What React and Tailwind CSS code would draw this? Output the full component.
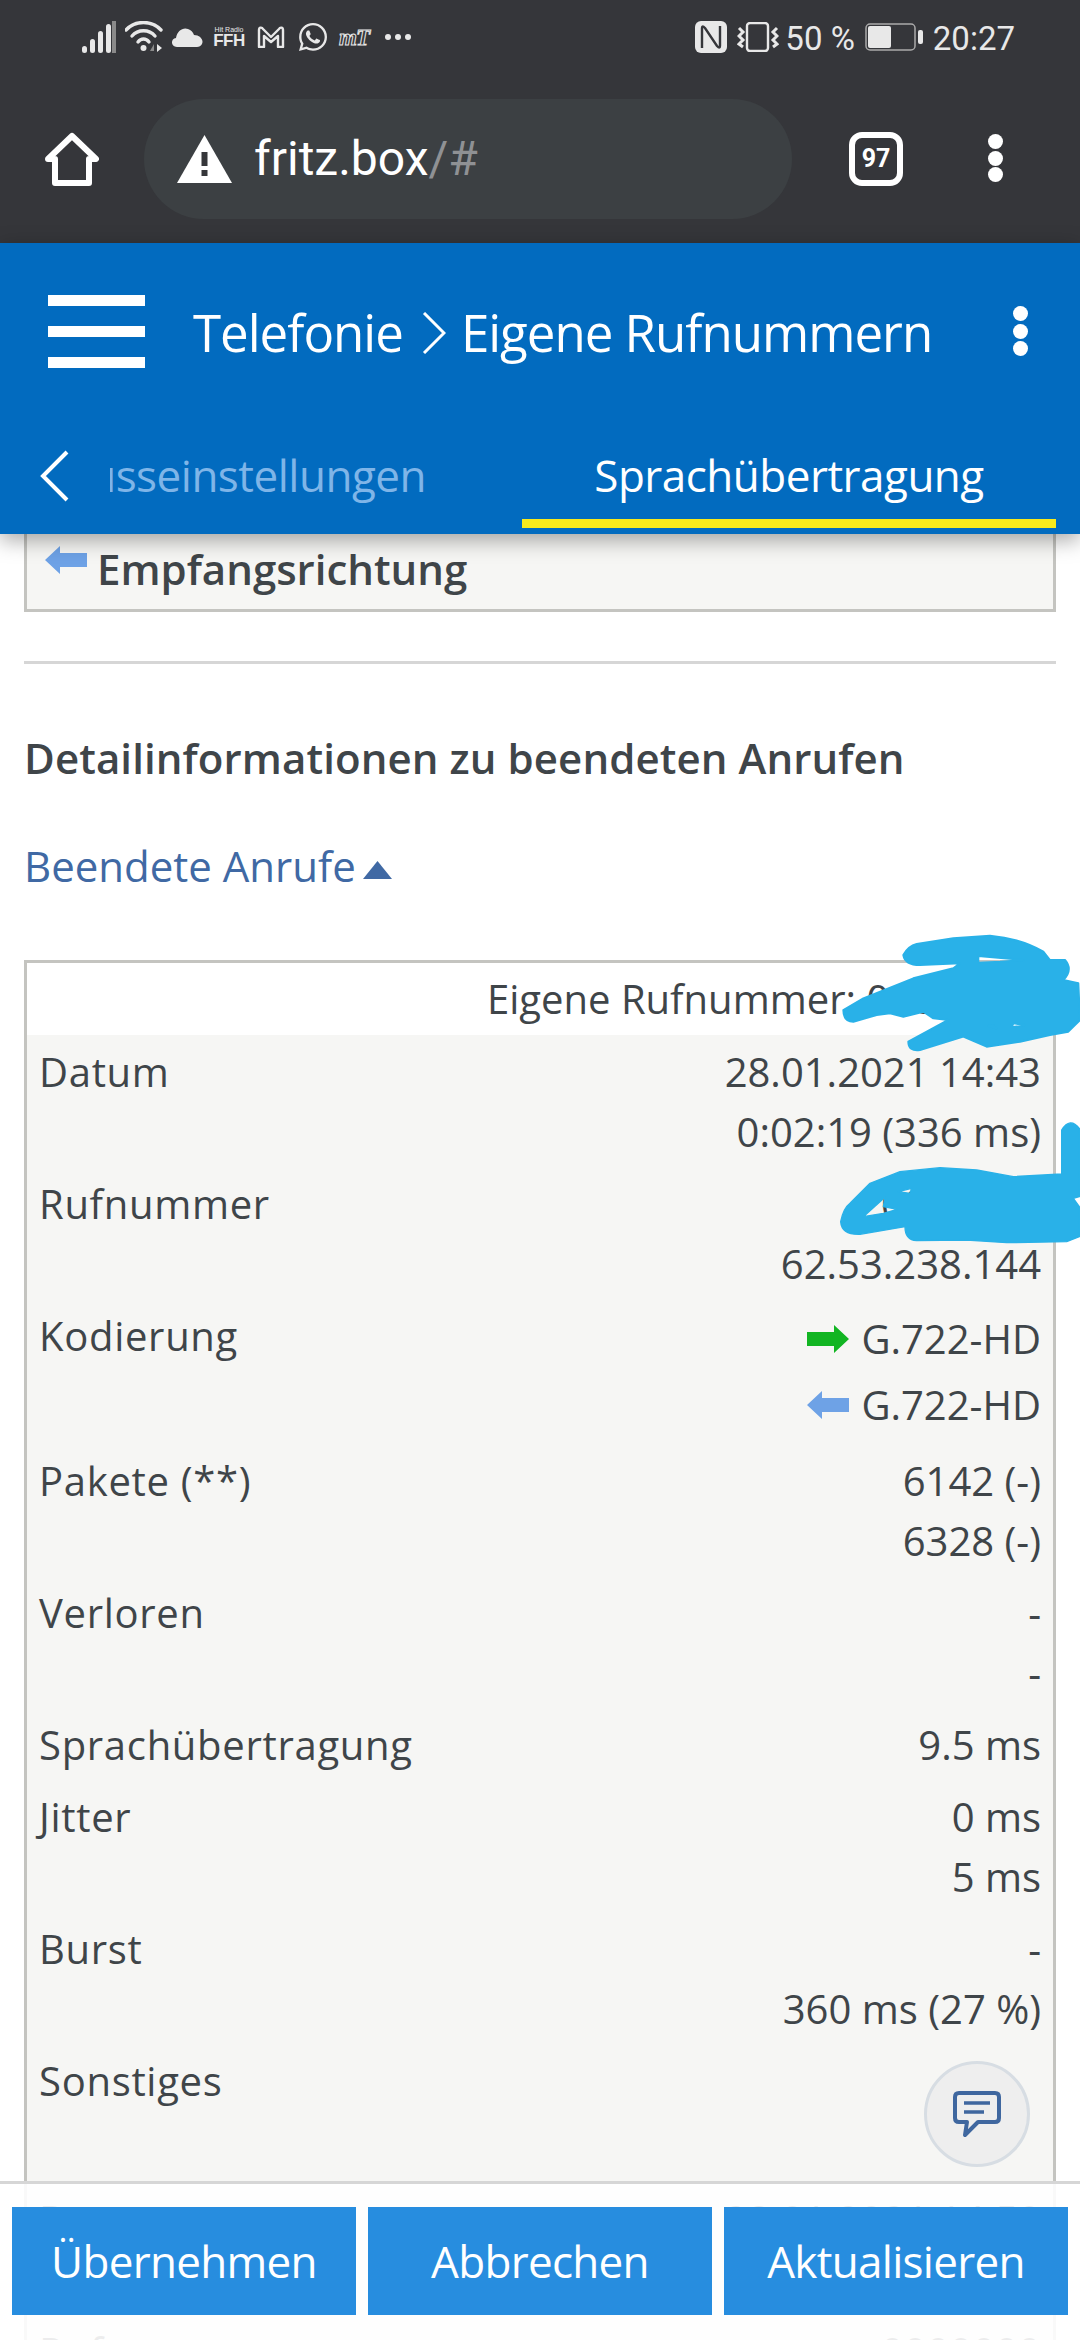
import React from 'react';
import { FaWhatsapp } from 'react-icons/fa';

const SOURCE = { fontFamily: '"Open Sans", "Noto Sans", sans-serif' };

function Arrow({ dir = 'left', color = '#6ea2e6' }) {
  return (
    <svg width="42" height="28" viewBox="0 0 42 28" className="shrink-0">
      {dir === 'left'
        ? <path d="M0 14 L15 0 L15 7 L42 7 L42 21 L15 21 L15 28 Z" fill={color} />
        : <path d="M42 14 L27 0 L27 7 L0 7 L0 21 L27 21 L27 28 Z" fill={color} />}
    </svg>
  );
}

function Dots({ className }) {
  return (
    <div className={'flex flex-col justify-between items-center ' + className}>
      <span className="w-[15px] h-[15px] rounded-full bg-white"></span>
      <span className="w-[15px] h-[15px] rounded-full bg-white"></span>
      <span className="w-[15px] h-[15px] rounded-full bg-white"></span>
    </div>
  );
}

function StatusBar() {
  return (
    <div className="h-[74px] flex items-center justify-between pl-[82px] pr-[65px] text-[#e8e8e8]">
      <div className="flex items-center">
        <svg width="34" height="32" viewBox="0 0 34 32">
          <rect x="0" y="25" width="5" height="7" rx="2.5" fill="#e8e8e8" />
          <rect x="8" y="18" width="5" height="14" rx="2.5" fill="#e8e8e8" />
          <rect x="16" y="10" width="5" height="22" rx="2.5" fill="#e8e8e8" />
          <rect x="24" y="3" width="5" height="29" rx="2.5" fill="#e8e8e8" />
          <rect x="30" y="0" width="4" height="32" fill="#8a8a8a" />
        </svg>
        <svg width="38" height="32" viewBox="0 0 38 32" className="ml-[9px]" fill="none" stroke="#e8e8e8" strokeWidth="3.4" strokeLinecap="round">
          <path d="M1 9 C10 -1 27 -1 36 9" />
          <path d="M7 15 C13 8 24 8 30 15" />
          <path d="M13 21 C16 17 21 17 24 21" />
          <circle cx="18.500" cy="27" r="3" fill="#e8e8e8" stroke="none" />
          <path d="M25 30 L29 23 L29 30 Z" fill="#8a8a8a" stroke="none" />
          <path d="M32 23 L37 27 L32 31 Z" fill="#e8e8e8" stroke="none" />
        </svg>
        <svg width="32" height="20" viewBox="0 0 32 20" className="ml-[8px]">
          <path d="M6 20 C0 20 -1 12 5 11 C6 4 12 0 17 2 C20 3 22 5 23 8 C29 8 33 13 31 17 C30 19 28 20 26 20 Z" fill="#e8e8e8" />
        </svg>
        <div className="ml-[10px] w-[32px] flex flex-col items-center leading-none" style={{ fontFamily: '"Liberation Sans", sans-serif' }}>
          <span className="text-[7px] leading-[8px]">Hit Radio</span>
          <span className="text-[17px] leading-[14px] font-bold tracking-[-0.5px]">FFH</span>
        </div>
        <svg width="28" height="22" viewBox="0 0 28 22" className="ml-[12px]" fill="none" stroke="#e8e8e8" strokeWidth="2.4" strokeLinejoin="round">
          <path d="M2 21 L2 4 C2 1 5 1 6 3 L14 11 L22 3 C23 1 26 1 26 4 L26 21 L21 21 L21 10 L14 16 L7 10 L7 21 Z" />
        </svg>
        <FaWhatsapp className="ml-[12px]" size={32} color="#e8e8e8" />
        <span className="ml-[10px] w-[30px] text-[23px] leading-none italic font-bold tracking-[-1px] text-transparent [-webkit-text-stroke:1px_#e8e8e8]" style={{ fontFamily: '"Liberation Serif", serif' }}>mT</span>
        <div className="ml-[16px] flex gap-[4px]">
          <span className="w-[6px] h-[6px] rounded-full bg-[#e8e8e8]"></span>
          <span className="w-[6px] h-[6px] rounded-full bg-[#e8e8e8]"></span>
          <span className="w-[6px] h-[6px] rounded-full bg-[#e8e8e8]"></span>
        </div>
      </div>
      <div className="flex items-center" style={{ fontFamily: 'Roboto, sans-serif' }}>
        <svg width="32" height="32" viewBox="0 0 32 32">
          <rect width="32" height="32" rx="6" fill="#e8e8e8" />
          <path d="M7 27 L7 7 Q7 4 10 7 L22 25 Q25 28 25 25 L25 5" fill="none" stroke="#35363a" strokeWidth="2.4" />
        </svg>
        <svg width="42" height="30" viewBox="0 0 42 30" className="ml-[10px]" fill="none" stroke="#e8e8e8" strokeWidth="2.4">
          <rect x="10" y="1" width="21" height="28" rx="3" />
          <path d="M2 6 L6 10 L2 14 L6 18 L2 22 L6 25" strokeWidth="3" />
          <path d="M40 6 L36 10 L40 14 L36 18 L40 22 L36 25" strokeWidth="3" />
        </svg>
        <span className="ml-[6px] mt-[2px] text-[33px] leading-none">50 %</span>
        <svg width="58" height="28" viewBox="0 0 58 28" className="ml-[10px]">
          <rect x="1" y="1" width="49" height="26" rx="4" fill="none" stroke="#aaaaaa" strokeWidth="1.500" />
          <rect x="3" y="3" width="23" height="22" rx="2" fill="#e8e8e8" />
          <rect x="53" y="7" width="5" height="14" rx="2" fill="#e8e8e8" />
        </svg>
        <span className="ml-[10px] mt-[2px] text-[33px] leading-none">20:27</span>
      </div>
    </div>
  );
}

function BrowserBar() {
  return (
    <div className="h-[169px] flex items-start pt-[25px] pl-[45px]">
      <svg width="54" height="54" viewBox="0 0 54 54" className="mt-[33px]" fill="none" stroke="#ffffff" strokeWidth="6" strokeLinejoin="round">
        <path d="M3 27 L27 4 L51 27 L44 27 L44 51 L10 51 L10 27 Z" />
      </svg>
      <div className="ml-[45px] w-[648px] h-[120px] rounded-full bg-[#3c4043] flex items-center pl-[33px]">
        <svg width="55" height="48" viewBox="0 0 55 48">
          <path d="M27.500 0 L55 48 L0 48 Z" fill="#ffffff" />
          <rect x="24.500" y="17" width="6" height="14" fill="#35363a" />
          <rect x="24.500" y="35" width="6" height="6" fill="#35363a" />
        </svg>
        <span className="ml-[22px] text-[48px] leading-none text-white" style={{ fontFamily: 'Roboto, sans-serif' }}>
          fritz.box<span className="text-[#8f9194]">/#</span>
        </span>
      </div>
      <div className="ml-[57px] mt-[33px] w-[54px] h-[54px] rounded-[13px] border-[6px] border-white flex items-center justify-center text-white text-[25px] font-bold" style={{ fontFamily: 'Roboto, sans-serif' }}>97</div>
      <Dots className="ml-[85px] mt-[35px] h-[48px]" />
    </div>
  );
}

function BlueHeader() {
  return (
    <div className="relative z-10 h-[291px] bg-[#026bbf] shadow-[0_6px_20px_rgba(0,0,0,0.35)] text-white">
      <div className="h-[210px] flex items-center pl-[48px] pb-[34px]">
        <div className="w-[97px] flex flex-col gap-[20px]">
          <div className="h-[11px] bg-white"></div>
          <div className="h-[11px] bg-white"></div>
          <div className="h-[11px] bg-white"></div>
        </div>
        <div className="ml-[48px] mt-[3px] flex items-center w-[760px] text-[51px] leading-none tracking-[-1px]" style={SOURCE}>
          <span>Telefonie</span>
          <svg width="24" height="42" viewBox="0 0 24 42" className="ml-[19px] mr-[15px]" fill="none" stroke="#ffffff" strokeWidth="3">
            <path d="M2 1 L22 21 L2 41" />
          </svg>
          <span>Eigene Rufnummern</span>
        </div>
        <Dots className="ml-[60px] h-[50px]" />
      </div>
      <div className="flex items-start h-[81px]">
        <svg width="30" height="52" viewBox="0 0 30 52" className="ml-[40px] mt-[-3px]" fill="none" stroke="#ffffff" strokeWidth="4">
          <path d="M27 2 L3 26 L27 50" />
        </svg>
        <div className="ml-[40px] mt-[-8px] w-[316px] overflow-hidden text-[44px] leading-[60px] text-[#7fb5e8] tracking-[-0.5px] whitespace-nowrap flex justify-end" style={SOURCE}>
          Anschlusseinstellungen
        </div>
        <div className="ml-[96px] w-[534px] h-[75px] border-b-[9px] border-[#f8ea1c] text-center text-[44px] leading-[44px] tracking-[-0.5px]" style={SOURCE}>
          Sprachübertragung
        </div>
      </div>
    </div>
  );
}

function Row({ label, values, pad = 'pb-[12px]' }) {
  return (
    <div className={'flex justify-between ' + pad}>
      <div className="h-[60px] leading-[60px] tracking-[0.7px]">{label}</div>
      <div className="flex flex-col items-end">
        {values.map((v, i) => (
          <div key={i} className="min-h-[60px] leading-[60px]">{v}</div>
        ))}
      </div>
    </div>
  );
}

function Codec({ dir, color }) {
  return (
    <div className="h-[66px] flex items-center gap-[12px]">
      <Arrow dir={dir} color={color} />
      <span>G.722-HD</span>
    </div>
  );
}

function CallTable() {
  return (
    <div className="border-[3px] border-[#c4c4c0] border-b-0 bg-[#f6f6f4] text-[40px] text-[#3f4549]">
      <div className="h-[72px] bg-white leading-[72px] pl-[460px] whitespace-nowrap overflow-hidden">Eigene Rufnummer: 0000000</div>
      <div className="px-[12px] pt-[7px]">
        <Row label="Datum" values={['28.01.2021 14:43', '0:02:19 (336 ms)']} />
        <Row label="Rufnummer" values={['0000000', '62.53.238.144']} />
        <div className="flex justify-between pb-[13px]">
          <div className="h-[60px] leading-[60px] tracking-[0.7px]">Kodierung</div>
          <div className="flex flex-col items-end">
            <Codec dir="right" color="#12b522" />
            <Codec dir="left" color="#6ea2e6" />
          </div>
        </div>
        <Row label="Pakete (**)" values={['6142 (-)', '6328 (-)']} />
        <Row label="Verloren" values={['-', '-']} />
        <Row label="Sprachübertragung" values={['9.5 ms']} />
        <Row label="Jitter" values={['0 ms', '5 ms']} />
        <Row label="Burst" values={['-', '360 ms (27 %)']} />
        <Row label="Sonstiges" values={['', '']} pad="pb-[19px]" />
        <Row label="Datum" values={['28.01.2021 14:50', '0:02:19']} />
        <Row label="Rufnummer" values={['0000000']} />
      </div>
    </div>
  );
}

function Footer() {
  return (
    <div className="absolute left-0 right-0 top-[2181px] h-[159px] bg-white/90 border-t-[3px] border-[#d6d6d6] flex gap-[12px] px-[12px] pt-[23px]">
      {['Übernehmen', 'Abbrechen', 'Aktualisieren'].map(t => (
        <button key={t} className="flex-1 h-[108px] bg-[#278ddf] text-white text-[44px] tracking-[-0.7px]" style={SOURCE}>{t}</button>
      ))}
    </div>
  );
}

function ChatBubble() {
  return (
    <div className="absolute left-[924px] top-[2061px] w-[106px] h-[106px] rounded-full bg-[#eeeeee] border-[3px] border-[#d7dde3] flex items-center justify-center">
      <svg width="48" height="48" viewBox="0 0 48 48" fill="none" stroke="#3f679f" strokeWidth="4" strokeLinejoin="round">
        <path d="M6 3 L42 3 Q46 3 46 7 L46 28 Q46 32 42 32 L25 32 L12 45 L14 32 L6 32 Q2 32 2 28 L2 7 Q2 3 6 3 Z" />
        <path d="M11 13 L37 13 M11 22 L31 22" strokeWidth="3.500" />
      </svg>
    </div>
  );
}

// the blue pen marks hiding the phone numbers
function Scribbles() {
  return (
    <>
      <svg width="260" height="140" viewBox="0 0 780 420" className="absolute left-[820px] top-[920px]" fill="#29b1e8" stroke="#29b1e8" strokeWidth="6" strokeLinejoin="round" fillRule="evenodd">
        <path d="M250 105 Q265 78 290 72 L400 55 L510 47 Q600 55 670 95 L690 120 L735 120 Q760 150 730 180 L775 190 L780 300 L745 335 L690 345 L600 365 L500 380 L430 350 L300 390 Q265 395 265 365 L385 300 L340 295 L310 275 L250 290 L210 280 L170 285 L100 305 Q70 305 70 270 L130 235 L280 175 L400 145 L420 130 L300 135 Q255 135 250 105 Z M475 108 L610 120 L540 125 L475 128 Z M505 318 L530 325 L520 316 Z M575 322 L615 315 L580 310 Z" />
      </svg>
      <svg width="260" height="180" viewBox="0 0 780 540" className="absolute left-[820px] top-[1100px]" fill="#29b1e8" stroke="#29b1e8" strokeWidth="4" strokeLinejoin="round" fillRule="evenodd">
        <path d="M62 365 Q70 325 90 310 L150 250 L240 215 L360 203 L470 210 L580 230 L725 222 L725 90 Q750 50 778 85 L778 290 L760 295 L778 320 L778 410 L740 425 L560 428 L440 420 L290 422 Q255 420 255 380 L120 403 Q65 405 62 365 Z M130 350 L195 292 L190 320 L232 328 L190 340 Z M235 275 L275 265 L270 280 Z" />
      </svg>
    </>
  );
}

export default function App() {
  return (
    <div className="relative w-[1080px] h-[2340px] overflow-hidden bg-white" style={SOURCE}>
      <div className="bg-[#35363a]">
        <StatusBar />
        <BrowserBar />
      </div>
      <BlueHeader />
      <div className="px-[24px] text-[#3f4549]">
        <div className="h-[78px] border-[3px] border-t-0 border-[#c4c4c0] bg-[#f6f6f4] flex items-start pl-[18px] pt-[12px]">
          <Arrow />
          <span className="ml-[10px] text-[42px] leading-[46px] font-semibold">Empfangsrichtung</span>
        </div>
        <div className="mt-[49px] h-[3px] bg-[#d6d6d6]"></div>
        <h2 className="mt-[66px] text-[42px] leading-[56px] font-semibold tracking-[0.1px]">Detailinformationen zu beendeten Anrufen</h2>
        <div className="mt-[52px] flex items-center text-[42px] leading-[56px] text-[#4069a4]">
          Beendete Anrufe
          <svg width="29" height="18" viewBox="0 0 29 18" className="ml-[7px] mt-[8px]"><path d="M14.500 0 L29 18 L0 18 Z" fill="#4069a4" /></svg>
        </div>
        <div className="mt-[66px]">
          <CallTable />
        </div>
      </div>
      <Scribbles />
      <ChatBubble />
      <Footer />
    </div>
  );
}
